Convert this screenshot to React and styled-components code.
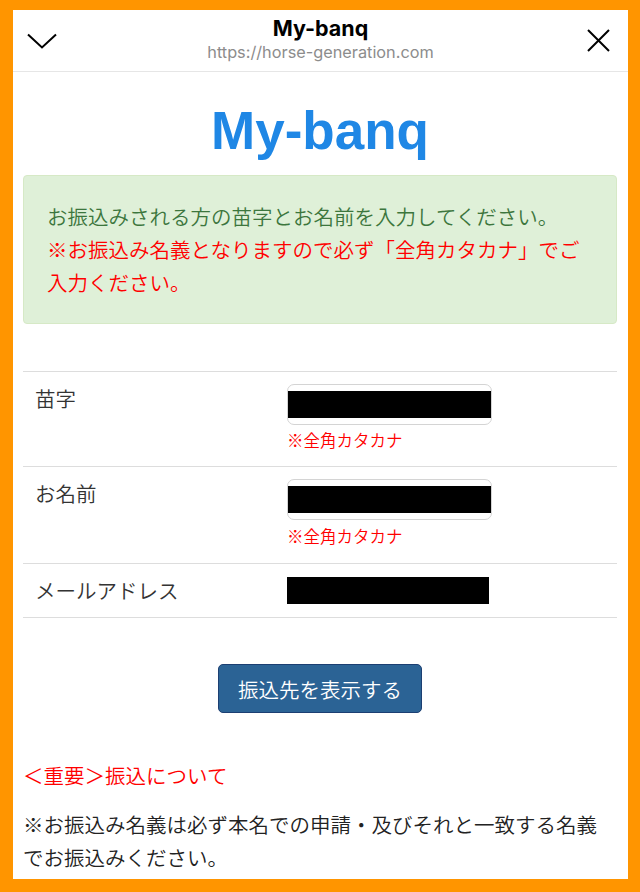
import React from "react";
import styled, { createGlobalStyle } from "styled-components";

const Global = createGlobalStyle`
  html, body { margin: 0; padding: 0; background: #ff9500; }
  body { font-family: "Noto Sans CJK JP", "Noto Sans", sans-serif; }
  * { box-sizing: border-box; }
`;

const Frame = styled.div`
  margin: 10px 12px 0 13px;
  height: 869px;
  background: #fff;
  overflow: hidden;
`;

const Header = styled.header`
  height: 62px;
  display: flex;
  align-items: center;
  padding: 0 14px;
  border-bottom: 1px solid #e6e6e6;
`;

const IconSlot = styled.div`
  width: 48px;
  display: flex;
  justify-content: ${(p) => (p.$end ? "flex-end" : "flex-start")};
  padding-right: ${(p) => (p.$end ? "4px" : "0")};
`;

const HeaderText = styled.div`
  flex: 1;
  align-self: stretch;
  padding-top: 6px;
  display: flex;
  flex-direction: column;
  align-items: center;
`;

const HeaderTitle = styled.div`
  font-family: Inter, "Liberation Sans", sans-serif;
  font-weight: 700;
  font-size: 21.5px;
  line-height: 24px;
  color: #000;
`;

const HeaderUrl = styled.div`
  font-family: Inter, "Liberation Sans", sans-serif;
  font-size: 16.3px;
  line-height: 24px;
  color: #8c8c8c;
`;

const Content = styled.main`
  padding: 0 11px 0 10px;
`;

const Logo = styled.h1`
  margin: 32px 0 18px;
  text-align: center;
  font-family: "Liberation Sans", Arial, sans-serif;
  font-weight: 700;
  font-size: 53px;
  line-height: 53px;
  color: #1f87e5;
`;

const Notice = styled.div`
  background: #dff0d8;
  border: 1px solid #d6e9c6;
  border-radius: 4px;
  padding: 24px 23px;
  font-size: 20.5px;
  font-weight: 350;
  line-height: 33px;
  color: #3c763d;
`;

const NoticeLine = styled.p`
  margin: 0;
  color: ${(p) => (p.$alert ? "#ff0000" : "inherit")};
`;

const Form = styled.div`
  margin-top: 47px;
  border-top: 1px solid #dddddd;
`;

const Row = styled.div`
  display: grid;
  grid-template-columns: 252px 1fr;
  border-bottom: 1px solid #dddddd;
`;

const Label = styled.div`
  padding: 12px;
  font-size: 20.5px;
  font-weight: 350;
  line-height: ${(p) => (p.$tall ? "29px" : "28px")};
  color: #333;
`;

const Value = styled.div`
  padding: 12px;
  display: flex;
  flex-direction: column;
  align-items: flex-start;
  justify-content: center;
`;

const InputBox = styled.div`
  width: 205px;
  height: 41px;
  border: 1px solid #d4d4d4;
  border-radius: 7px;
  display: flex;
  align-items: center;
  overflow: hidden;
`;

const Redacted = styled.div`
  width: ${(p) => (p.$bare ? "202px" : "100%")};
  height: 27px;
  background: #000;
`;

const Hint = styled.div`
  margin-top: 2px;
  font-size: 16.5px;
  font-weight: 350;
  line-height: ${(p) => (p.$tall ? "29px" : "27px")};
  color: #ff0000;
`;

const ButtonWrap = styled.div`
  margin-top: 46px;
  display: flex;
  justify-content: center;
`;

const Button = styled.button`
  width: 204px;
  height: 49px;
  background: #2b6395;
  border: 1px solid #1c3f72;
  border-radius: 5px;
  color: #fff;
  font-family: "Noto Sans CJK JP", sans-serif;
  font-size: 20.5px;
  font-weight: 350;
  padding: 0;
`;

const Important = styled.h2`
  margin: 46px 0 0;
  font-weight: 350;
  font-size: 20.5px;
  line-height: 33px;
  color: #ff0000;
`;

const Body = styled.p`
  margin: 16px 0 0;
  padding-right: 4px;
  font-size: 20.5px;
  font-weight: 350;
  line-height: 33px;
  color: #222;
`;

const Chevron = () => (
  <svg width="30" height="16" viewBox="0 0 30 16" fill="none">
    <path d="M1 1.5 L15 14.5 L29 1.5" stroke="#000" strokeWidth="2" />
  </svg>
);

const Close = () => (
  <svg width="23" height="23" viewBox="0 0 23 23" fill="none">
    <path d="M1 1 L22 22 M22 1 L1 22" stroke="#000" strokeWidth="2" />
  </svg>
);

export default function App() {
  return (
    <>
      <Global />
      <Frame>
        <Header>
          <IconSlot>
            <Chevron />
          </IconSlot>
          <HeaderText>
            <HeaderTitle>My-banq</HeaderTitle>
            <HeaderUrl>https://horse-generation.com</HeaderUrl>
          </HeaderText>
          <IconSlot $end>
            <Close />
          </IconSlot>
        </Header>
        <Content>
          <Logo>My-banq</Logo>
          <Notice>
            <NoticeLine>お振込みされる方の苗字とお名前を入力してください。</NoticeLine>
            <NoticeLine $alert>
              ※お振込み名義となりますので必ず「全角カタカナ」でご入力ください。
            </NoticeLine>
          </Notice>
          <Form>
            <Row>
              <Label>苗字</Label>
              <Value>
                <InputBox>
                  <Redacted />
                </InputBox>
                <Hint>※全角カタカナ</Hint>
              </Value>
            </Row>
            <Row>
              <Label>お名前</Label>
              <Value>
                <InputBox>
                  <Redacted />
                </InputBox>
                <Hint $tall>※全角カタカナ</Hint>
              </Value>
            </Row>
            <Row>
              <Label $tall>メールアドレス</Label>
              <Value>
                <Redacted $bare />
              </Value>
            </Row>
          </Form>
          <ButtonWrap>
            <Button type="button">振込先を表示する</Button>
          </ButtonWrap>
          <Important>＜重要＞振込について</Important>
          <Body>
            ※お振込み名義は必ず本名での申請・及びそれと一致する名義でお振込みください。
          </Body>
        </Content>
      </Frame>
    </>
  );
}
